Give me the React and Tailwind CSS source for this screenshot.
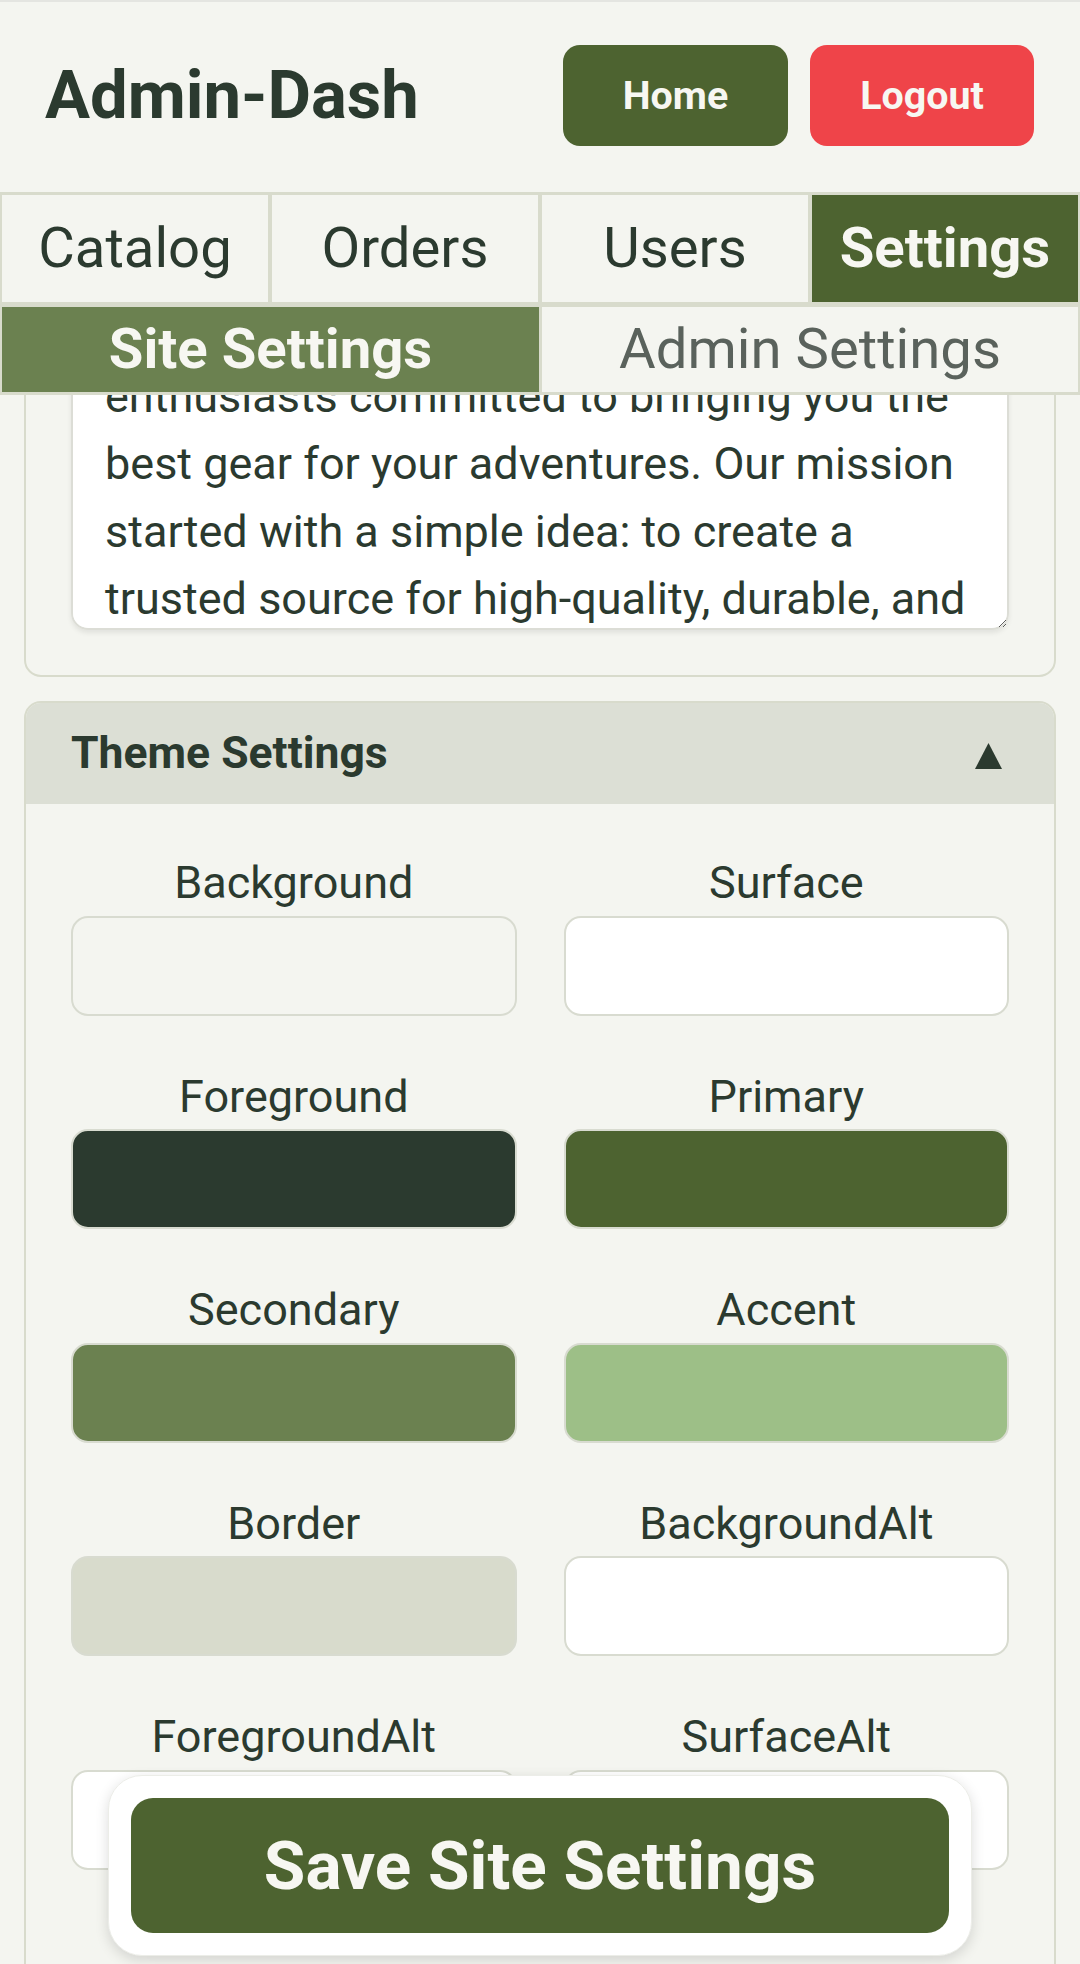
import React from "react";

const tabs = [
  { label: "Catalog", active: false },
  { label: "Orders", active: false },
  { label: "Users", active: false },
  { label: "Settings", active: true },
];

const swatches = [
  ["Background", "#f4f5f0"],
  ["Surface", "#ffffff"],
  ["Foreground", "#2b3a2f"],
  ["Primary", "#4d6330"],
  ["Secondary", "#6b8150"],
  ["Accent", "#9dbf87"],
  ["Border", "#d8dbcc"],
  ["BackgroundAlt", "#ffffff"],
  ["ForegroundAlt", "#ffffff"],
  ["SurfaceAlt", "#ffffff"],
];

const aboutText =
  "We are a passionate team of outdoor\nenthusiasts committed to bringing you the best gear for your adventures. Our mission started with a simple idea: to create a trusted source for high-quality, durable, and affordable outdoor equipment that helps you explore further and stay safe along the way.";

export default function App() {
  return (
    <div className="min-h-screen bg-[#f4f5f0] font-[Roboto,sans-serif] text-[#2b3a2f]">
      {/* Header */}
      <header className="flex h-[192px] items-start justify-between border-t-2 border-[#e4e5e1] pl-[45px] pr-[46px]">
        <h1 className="mt-[48px] text-[67px] font-bold leading-[90px] text-[#2b3a2f]">
          Admin-Dash
        </h1>
        <div className="mt-[43px] flex gap-[22px]">
          <button className="h-[101px] w-[225px] rounded-[17px] bg-[#4d6330] text-[39.4px] font-bold text-[#f7f7f2]">
            Home
          </button>
          <button className="h-[101px] w-[224px] rounded-[17px] bg-[#ef4449] text-[39.4px] font-bold text-[#f7f7f2]">
            Logout
          </button>
        </div>
      </header>

      {/* Tabs */}
      <nav className="bg-[#d8dbcc] px-[2px] pb-[3px] pt-[3px]">
        <div className="grid h-[107px] grid-cols-4 gap-[4px]">
          {tabs.map((t) =>
            t.active ? (
              <div
                key={t.label}
                className="flex items-center justify-center bg-[#4d6330] text-[56.25px] font-bold text-[#f7f7f2]"
              >
                {t.label}
              </div>
            ) : (
              <div
                key={t.label}
                className="flex items-center justify-center bg-[#f4f5f0] text-[56.25px] text-[#2b3a2f]"
              >
                {t.label}
              </div>
            )
          )}
        </div>
        <div className="mt-[5px] flex h-[85px]">
          <div className="flex w-[537px] items-center justify-center bg-[#6b8150] text-[56.25px] font-bold text-[#f7f7f2]">
            Site Settings
          </div>
          <div className="ml-[3px] flex flex-1 items-center justify-center bg-[#f4f5f0] text-[56.25px] text-[#5a625c]">
            Admin Settings
          </div>
        </div>
      </nav>

      {/* Scrolled content */}
      <main className="overflow-hidden px-[24px] pb-[40px]">
        <section className="-mt-[183px] rounded-[17px] border-2 border-[#d8dbcc] p-[45px]">
          <textarea
            readOnly
            defaultValue={aboutText}
            className="block h-[371px] w-full resize-y rounded-[17px] border-2 border-[#dcddd6] bg-white py-[34px] pl-[32px] pr-[28px] text-[45px] leading-[67.5px] text-[#2b3a2f] shadow-[0_3px_5px_rgba(0,0,0,0.08)] outline-none [scrollbar-width:none]"
          />
        </section>

        <section className="mt-[24px] overflow-hidden rounded-[17px] border-2 border-[#d8dbcc]">
          <div className="flex h-[101px] items-center justify-between bg-[#dcdfd5] pl-[45px] pr-[52px]">
            <h2 className="text-[44.5px] font-bold leading-[67.5px] text-[#2b3a2f]">
              Theme Settings
            </h2>
            <svg width="27" height="26" viewBox="0 0 27 26" className="mt-[4px]">
              <path d="M13.5 0 L27 26 L0 26 Z" fill="#2b3a2f" />
            </svg>
          </div>
          <div className="grid grid-cols-2 gap-x-[47px] gap-y-[47px] px-[45px] pb-[260px] pt-[45px]">
            {swatches.map(([name, color]) => (
              <div key={name} className="flex flex-col">
                <label className="text-center text-[45px] leading-[67.5px] text-[#2b3a2f]">
                  {name}
                </label>
                <div
                  className="-mt-[1px] h-[100px] w-full rounded-[17px] border-2 border-[#d8dbd0]"
                  style={{ backgroundColor: color }}
                />
              </div>
            ))}
          </div>
        </section>
      </main>

      {/* Floating save bar */}
      <div className="fixed bottom-[8px] left-[108px] right-[108px] rounded-[34px] border border-[#ecede8] bg-white p-[22px] shadow-[0_4px_14px_rgba(0,0,0,0.14)]">
        <button className="h-[135px] w-full rounded-[22px] bg-[#4d6330] text-[67.5px] font-bold text-[#f7f7f2]">
          Save Site Settings
        </button>
      </div>
    </div>
  );
}
